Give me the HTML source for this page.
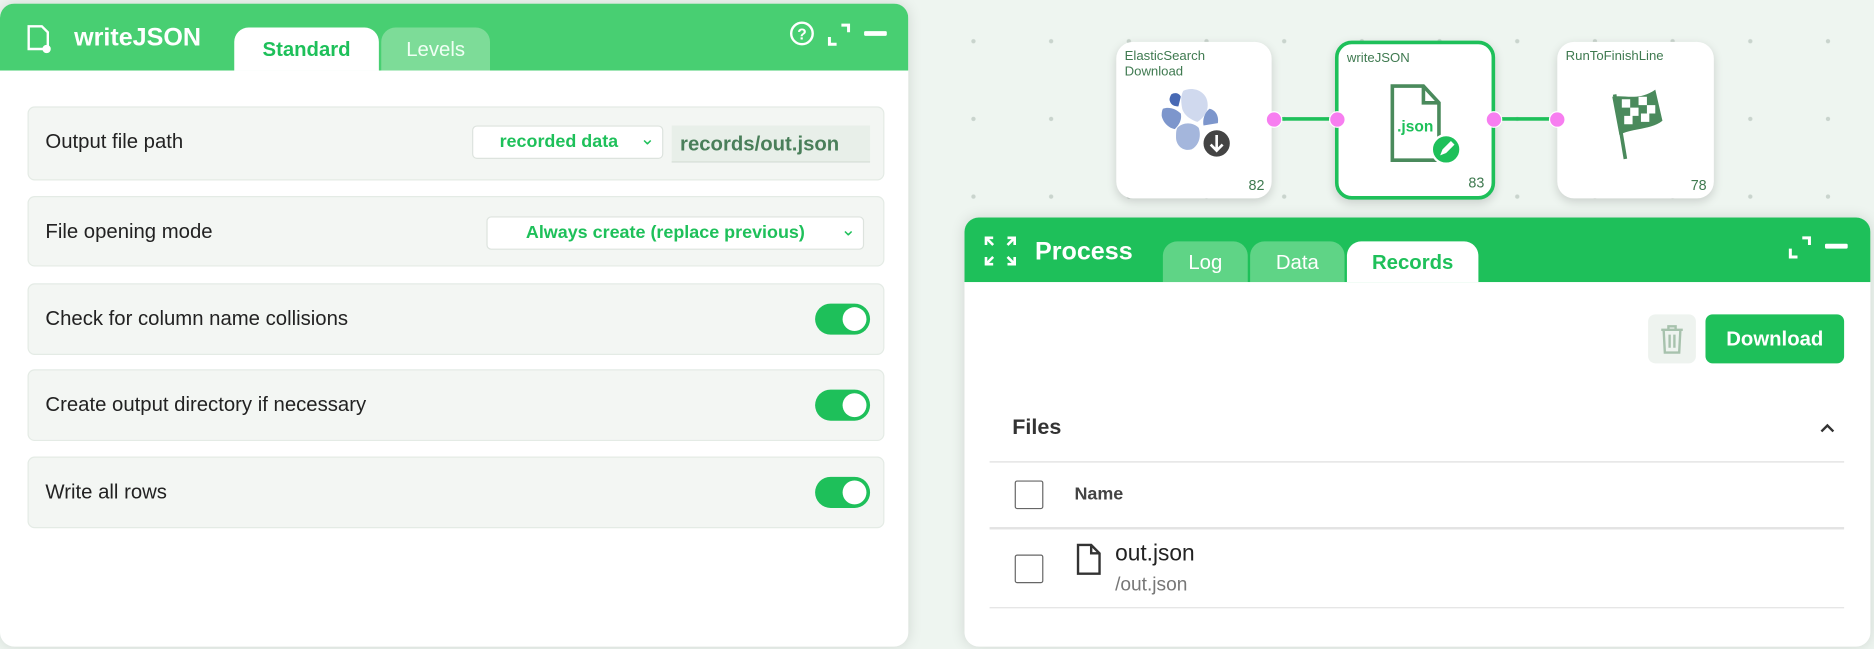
<!DOCTYPE html>
<html><head><meta charset="utf-8"><style>
html,body{margin:0;padding:0;width:1874px;height:649px;overflow:hidden;background:#eef5f0;font-family:"Liberation Sans",sans-serif}
#w{position:absolute;left:0;top:0;width:1568px;height:543px;transform:scale(1.19515);transform-origin:0 0;
background-color:#eef5f0;background-image:radial-gradient(circle,#c9d4cd 1.6px,transparent 2px);background-size:65px 65px;background-position:782px 2px}
.a{position:absolute}
.panel{background:#fff;border-radius:12px;overflow:hidden;box-shadow:0 0 12px rgba(0,0,0,.12)}
.row{position:absolute;left:23px;width:715px;background:#f3f6f3;border:1px solid #e4ebe5;border-radius:6px}
.row span.l{position:absolute;left:14px;font-size:17px;color:#222}
.tg{position:absolute;left:658px;width:46px;height:26px;border-radius:13px;background:#1ec05a}
.tg:after{content:"";position:absolute;right:3px;top:3px;width:20px;height:20px;border-radius:50%;background:#fff}
.node{position:absolute;top:35px;width:130px;height:131px;background:#fff;border-radius:14px;box-shadow:0 3px 8px rgba(0,0,0,.15)}
.node .t{position:absolute;left:7px;top:6px;font-size:11px;color:#3f7a50;line-height:13px}
.node .n{position:absolute;right:6px;bottom:4px;font-size:12px;color:#3f7a50}
.port{position:absolute;width:12px;height:12px;border-radius:50%;background:#f77ef0;border:1px solid #fff}
.tab{position:absolute;border-radius:12px 12px 0 0;text-align:center;font-size:17px}
.cb{position:absolute;width:22px;height:22px;border:1.5px solid #666;border-radius:2px;background:#fff}
</style></head><body><div id="w">

<!-- left panel -->
<div class="a panel" style="left:0;top:3px;width:760px;height:538px">
 <div class="a" style="left:0;top:0;width:760px;height:56px;background:#48cf72"></div>
 <svg class="a" style="left:20px;top:17px" width="26" height="26" viewBox="0 0 26 26"><path d="M4 2h11l5 5v14H4z" fill="none" stroke="#fff" stroke-width="2"/><circle cx="19" cy="21" r="3.5" fill="#fff"/></svg>
 <div class="a" style="left:62px;top:17px;font-size:21px;font-weight:bold;color:#fff">writeJSON</div>
 <div class="tab" style="left:196px;top:20px;width:121px;height:36px;background:#fff;color:#1ec05a;font-weight:bold;line-height:38px">Standard</div>
 <div class="tab" style="left:319px;top:20px;width:91px;height:36px;background:#7ddc98;color:#f0fff4;line-height:38px">Levels</div>
 <svg class="a" style="left:660px;top:14px" width="90" height="24" viewBox="0 0 90 24"><circle cx="11" cy="11" r="9" fill="none" stroke="#fff" stroke-width="2"/><text x="11" y="16" font-size="13" font-weight="bold" fill="#fff" text-anchor="middle" font-family="Liberation Sans">?</text><path d="M34 14v6h6M44 4h6v6" fill="none" stroke="#fff" stroke-width="2.5"/><rect x="63" y="9" width="19" height="4" rx="1" fill="#fff"/></svg>
 <div class="row" style="top:86px;height:60px"><span class="l" style="top:19px">Output file path</span>
  <div class="a" style="left:371px;top:15px;width:158px;height:26px;background:#fff;border:1px solid #dde3de;border-radius:4px;font-size:15px;font-weight:bold;color:#1ec05a;line-height:26px;text-indent:22px">recorded data<span style="position:absolute;right:6px;top:-2px;font-weight:normal">&#8964;</span></div>
  <div class="a" style="left:538px;top:15px;width:166px;height:30px;background:#e8efe9;border-bottom:1px solid #d5ddd6;font-size:17px;font-weight:bold;color:#4a7f5a;line-height:32px;text-indent:7px">records/out.json</div>
 </div>
 <div class="row" style="top:161px;height:57px"><span class="l" style="top:19px">File opening mode</span>
  <div class="a" style="left:383px;top:16px;width:314px;height:26px;background:#fff;border:1px solid #dde3de;border-radius:4px;font-size:15px;font-weight:bold;color:#1ec05a;line-height:26px;text-indent:32px">Always create (replace previous)<span style="position:absolute;right:6px;top:-2px;font-weight:normal">&#8964;</span></div>
 </div>
 <div class="row" style="top:234px;height:58px"><span class="l" style="top:19px">Check for column name collisions</span><div class="tg" style="top:16px"></div></div>
 <div class="row" style="top:306px;height:58px"><span class="l" style="top:19px">Create output directory if necessary</span><div class="tg" style="top:16px"></div></div>
 <div class="row" style="top:379px;height:58px"><span class="l" style="top:19px">Write all rows</span><div class="tg" style="top:16px"></div></div>
</div>

<!-- graph -->
<div class="a" style="left:1065px;top:98px;width:240px;height:3px;background:#1ec05a"></div>
<div class="node" style="left:934px"><div class="t">ElasticSearch<br>Download</div>
 <svg class="a" style="left:34px;top:38px" width="64" height="64" viewBox="0 0 64 64">
  <path d="M22 3c8-4 18 0 20 8 2 8-2 14-8 18-6-2-12-6-13-12-1-6-1-10 1-14z" fill="#d0d9ee"/>
  <path d="M12 6c3-2 7-1 8 2l-2 8c-3 0-6-1-7-4-1-2 0-4 1-6z" fill="#4869b4"/>
  <path d="M5 18c5-2 11 0 15 4 1 5-1 9-5 13-6-1-10-6-11-11 0-2 0-4 1-6z" fill="#7d96cc"/>
  <path d="M17 34c5-5 13-5 18 0 2 6 1 14-6 18-8 2-13-4-13-10 0-3 0-6 1-8z" fill="#a4b6dc"/>
  <path d="M44 18c5 1 8 6 7 12l-12 2c-1-5 1-11 5-14z" fill="#7d96cc"/>
  <circle cx="50" cy="47" r="12" fill="#444" stroke="#fff" stroke-width="2"/><path d="M50 40v13M45 48l5 5 5-5" fill="none" stroke="#fff" stroke-width="2.2"/></svg>
 <div class="n">82</div></div>
<div class="node" style="left:1117px;width:128px;height:127px;border:3px solid #1ec05a;top:34px"><div class="t">writeJSON</div>
 <svg class="a" style="left:40px;top:33px" width="66" height="68" viewBox="0 0 66 68"><path d="M5 2h26l13 14v48H5z" fill="none" stroke="#4a8a5c" stroke-width="3"/><path d="M31 2v14h13" fill="none" stroke="#4a8a5c" stroke-width="3"/><text x="9" y="40" font-size="13" font-weight="bold" fill="#1ec05a" font-family="Liberation Sans">.json</text><circle cx="50" cy="55" r="12" fill="#1ec05a" stroke="#fff" stroke-width="2"/><path d="M45 60l2-5 7-7 3 3-7 7z" fill="#fff"/></svg>
 <div class="n">83</div></div>
<div class="node" style="left:1303px;width:131px"><div class="t">RunToFinishLine</div>
 <svg class="a" style="left:40px;top:38px" width="52" height="62" viewBox="0 0 52 62"><path d="M8 6l9 54" stroke="#4a8a5c" stroke-width="3"/><path d="M6 8c10-2 22 4 36-6l6 26c-10 8-26 6-36 12z" fill="#4a8a5c"/><path d="M14 10h7v7h-7zM28 8h7v7h-7zM21 17h7v7h-7zM35 15h7v7h-7zM16 24h7v7h-7zM30 22h7v7h-7z" fill="#fff"/></svg>
 <div class="n">78</div></div>
<div class="port" style="left:1059px;top:93px"></div><div class="port" style="left:1112px;top:93px"></div>
<div class="port" style="left:1243px;top:93px"></div><div class="port" style="left:1296px;top:93px"></div>

<!-- process panel -->
<div class="a panel" style="left:807px;top:182px;width:758px;height:359px">
 <div class="a" style="left:0;top:0;width:758px;height:54px;background:#1ec05a"></div>
 <svg class="a" style="left:15px;top:14px" width="30" height="28" viewBox="0 0 30 28"><path d="M9 3H3v6M3 3l6 6M21 3h6v6M27 3l-6 6M3 19v6h6M3 25l6-6M27 19v6h-6M27 25l-6-6" fill="none" stroke="#fff" stroke-width="2.2"/></svg>
 <div class="a" style="left:59px;top:17px;font-size:21px;font-weight:bold;color:#fff">Process</div>
 <div class="tab" style="left:166px;top:20px;width:71px;height:34px;background:#5fd486;color:#fff;line-height:36px">Log</div>
 <div class="tab" style="left:239px;top:20px;width:79px;height:34px;background:#5fd486;color:#fff;line-height:36px">Data</div>
 <div class="tab" style="left:320px;top:20px;width:110px;height:34px;background:#fff;color:#1ec05a;font-weight:bold;line-height:36px">Records</div>
 <svg class="a" style="left:688px;top:14px" width="56" height="24" viewBox="0 0 56 24"><path d="M3 12v7h6M13 3h6v6" fill="none" stroke="#fff" stroke-width="2.5"/><rect x="32" y="8" width="19" height="4" rx="1" fill="#fff"/></svg>
 <div class="a" style="left:572px;top:81px;width:40px;height:41px;background:#eef3ef;border-radius:6px"></div>
 <svg class="a" style="left:581px;top:89px" width="22" height="26" viewBox="0 0 22 26"><path d="M2 5h18M8 5V2h6v3M4 5l1 19h12l1-19M9 9v11M13 9v11" fill="none" stroke="#a7c2ad" stroke-width="2"/></svg>
 <div class="a" style="left:620px;top:81px;width:116px;height:41px;background:#1ec05a;border-radius:6px;color:#fff;font-size:17px;font-weight:bold;text-align:center;line-height:41px">Download</div>
 <div class="a" style="left:40px;top:165px;font-size:18px;font-weight:bold;color:#333">Files</div>
 <svg class="a" style="left:715px;top:171px" width="14" height="10" viewBox="0 0 14 10"><path d="M2 8l5-5 5 5" fill="none" stroke="#333" stroke-width="2"/></svg>
 <div class="a" style="left:21px;top:204px;width:715px;height:1px;background:#ddd"></div>
 <div class="cb" style="left:42px;top:220px"></div>
 <div class="a" style="left:92px;top:223px;font-size:15px;font-weight:bold;color:#444">Name</div>
 <div class="a" style="left:21px;top:259px;width:715px;height:2px;background:#e3e3e3"></div>
 <div class="cb" style="left:42px;top:282px"></div>
 <svg class="a" style="left:93px;top:272px" width="22" height="28" viewBox="0 0 22 28"><path d="M2 2h11l7 7v17H2z M13 2v7h7" fill="none" stroke="#333" stroke-width="2"/></svg>
 <div class="a" style="left:126px;top:271px;font-size:19px;color:#222">out.json</div>
 <div class="a" style="left:126px;top:299px;font-size:16px;color:#777">/out.json</div>
 <div class="a" style="left:21px;top:326px;width:715px;height:1px;background:#e3e3e3"></div>
</div>
</div></body></html>
